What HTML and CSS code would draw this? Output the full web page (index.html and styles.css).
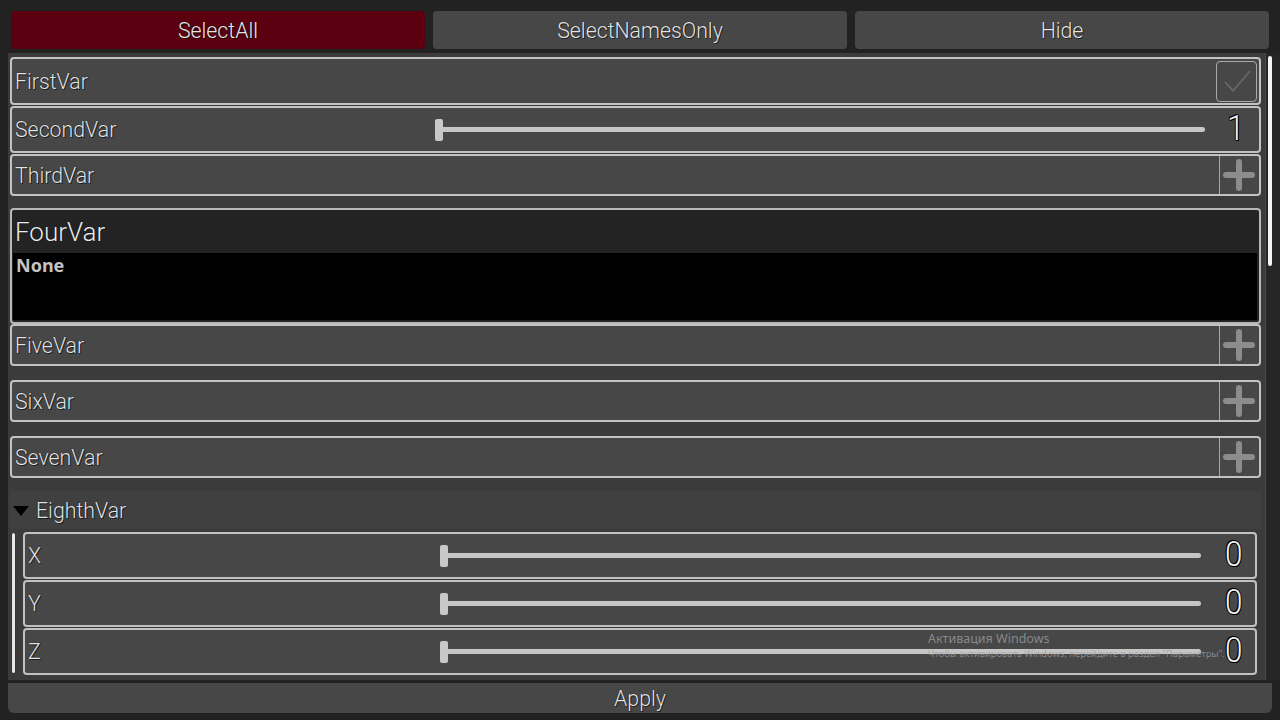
FILE: index.html
```html
<!DOCTYPE html>
<html>
<head>
<meta charset="utf-8">
<link rel="stylesheet" href="styles.css">
</head>
<body>
<div class="app">
  <div class="toolbar">
    <div class="tbtn active">SelectAll</div>
    <div class="tbtn">SelectNamesOnly</div>
    <div class="tbtn">Hide</div>
  </div>
  <div class="main">
    <div class="panel">
      <div class="row h48">
        <div class="label">FirstVar</div>
        <div class="spacer"></div>
        <div class="check">
          <svg width="34" height="34" viewBox="0 0 34 34"><path d="M5 18 L13 27 L30 7" fill="none" stroke="#6a6a6a" stroke-width="1.6" stroke-linejoin="round"/><path d="M6.5 18 L13 25 L29 7.5" fill="none" stroke="#555" stroke-width="0.8"/></svg>
        </div>
      </div>
      <div class="row h47">
        <div class="label">SecondVar</div>
        <div class="slider"><div class="track"></div><div class="handle"></div></div>
        <div class="value one">1</div>
      </div>
      <div class="row h42">
        <div class="label">ThirdVar</div>
        <div class="spacer"></div>
        <div class="plus"><span class="ph"></span><span class="pv"></span></div>
      </div>
      <div class="obj">
        <div class="obj-head">FourVar</div>
        <div class="obj-body">None</div>
      </div>
      <div class="row h42 touch">
        <div class="label">FiveVar</div>
        <div class="spacer"></div>
        <div class="plus"><span class="ph"></span><span class="pv"></span></div>
      </div>
      <div class="row h42 gap">
        <div class="label">SixVar</div>
        <div class="spacer"></div>
        <div class="plus"><span class="ph"></span><span class="pv"></span></div>
      </div>
      <div class="row h42 gap">
        <div class="label">SevenVar</div>
        <div class="spacer"></div>
        <div class="plus"><span class="ph"></span><span class="pv"></span></div>
      </div>
      <div class="fold">
        <span class="tri"></span>
        <span class="fold-label">EighthVar</span>
      </div>
      <div class="nested">
        <div class="bar"></div>
        <div class="nested-rows">
          <div class="row h47 sub">
            <div class="label">X</div>
            <div class="slider"><div class="track"></div><div class="handle"></div></div>
            <div class="value">0</div>
          </div>
          <div class="row h47 sub">
            <div class="label">Y</div>
            <div class="slider"><div class="track"></div><div class="handle"></div></div>
            <div class="value">0</div>
          </div>
          <div class="row h47 sub">
            <div class="label">Z</div>
            <div class="slider"><div class="track"></div><div class="handle"></div></div>
            <div class="value">0</div>
          </div>
        </div>
      </div>
    </div>
    <div class="scrollbar"><div class="thumb"></div></div>
  </div>
  <div class="apply">Apply</div>
  <div class="watermark">
    <div class="wm1">Активация Windows</div>
    <div class="wm2">Чтобы активировать Windows, перейдите в раздел "Параметры".</div>
  </div>
</div>
</body>
</html>
```

FILE: styles.css
```css
html, body {
  margin: 0;
  padding: 0;
  background: #222222;
}
body {
  width: 1280px;
  height: 720px;
  overflow: hidden;
  font-family: Roboto, "Liberation Sans", sans-serif;
  color: #e2e2e2;
}
.app {
  position: relative;
  width: 1280px;
  height: 720px;
  display: flex;
  flex-direction: column;
}
.toolbar {
  display: flex;
  gap: 8px;
  padding: 11px 11px 0 11px;
  height: 38px;
}
.tbtn {
  flex: 1;
  background: #474747;
  border-radius: 4px;
  display: flex;
  align-items: center;
  justify-content: center;
  font-size: 21.3px;
  font-weight: 300;
  color: #e6e6e6;
  text-shadow: 0 0 1px #111, 1px 1px 0 rgba(0,0,0,0.5);
}
.tbtn.active {
  background: #5a0010;
}
.main {
  margin-top: 4px;
  height: 627px;
  display: flex;
}
.panel {
  margin-left: 8px;
  width: 1253px;
  background: #3b3b3b;
  padding: 4px 4px 0 2px;
  display: flex;
  flex-direction: column;
  overflow: hidden;
}
.scrollbar {
  width: 15px;
  background: #262626;
  border-left: 1px solid #4a4a4a;
  padding: 3px 0 0 1px;
  box-sizing: border-box;
}
.thumb {
  width: 4px;
  height: 210px;
  background: #f4f4f4;
  border-radius: 2px;
  margin-left: 1px;
}
.row {
  box-sizing: border-box;
  background: #474747;
  border: 2px solid #c2c2c2;
  border-radius: 4px;
  display: flex;
  align-items: center;
  flex-shrink: 0;
}
.h48 { height: 48px; }
.h47 { height: 47px; margin-top: 1px; }
.h42 { height: 42px; margin-top: 1px; }
.row.touch { margin-top: 0; }
.row.gap { margin-top: 14px; }
.label {
  width: 420px;
  flex-shrink: 0;
  padding-left: 3px;
  font-size: 21.3px;
  font-weight: 300;
  color: #e4e4e4;
  text-shadow: 0 0 1px #000, 1px 1px 0 rgba(0,0,0,0.55);
}
.spacer { flex: 1; }
.check {
  width: 41px;
  height: 41px;
  box-sizing: border-box;
  border: 1.5px solid #a9a9a9;
  border-radius: 4px;
  margin-right: 2px;
  display: flex;
  align-items: center;
  justify-content: center;
}
.slider {
  flex: 1;
  position: relative;
  height: 24px;
  display: flex;
  align-items: center;
}
.track {
  flex: 1;
  height: 5px;
  background: #c6c6c6;
  border-radius: 3px;
  margin-left: 4px;
}
.handle {
  position: absolute;
  left: 0;
  top: 1px;
  width: 8px;
  height: 22px;
  background: #c8c8c8;
  border-radius: 2px;
}
.value {
  width: 54px;
  box-sizing: border-box;
  flex-shrink: 0;
  text-align: right;
  padding-right: 14px;
  margin-top: -2px;
  font-size: 35px;
  font-weight: 300;
  color: #f0f0f0;
  transform: scaleX(0.9);
  transform-origin: right center;
  text-shadow: -1px 0 #000, 1px 0 #000, 0 -1px #000, 0 1px #000, 1px 1px #000, -1px -1px #000;
}
.value.one { padding-right: 16px; }
.plus {
  width: 40px;
  height: 100%;
  box-sizing: border-box;
  border-left: 1.5px solid #a6a6a6;
  position: relative;
}
.ph, .pv {
  position: absolute;
  background: #8c8c8c;
  border-radius: 3px;
}
.ph {
  left: 3px;
  top: 16px;
  width: 32px;
  height: 6px;
}
.pv {
  left: 16px;
  top: 3px;
  width: 6px;
  height: 32px;
}
.obj {
  margin-top: 12px;
  height: 116px;
  box-sizing: border-box;
  border: 2px solid #b8b8b8;
  border-radius: 4px;
  background: #232323;
  display: flex;
  flex-direction: column;
  flex-shrink: 0;
  padding: 0 2px 2px 1px;
}
.obj-head {
  height: 43px;
  display: flex;
  align-items: center;
  padding-left: 2px;
  font-size: 26px;
  font-weight: 300;
  color: #ececec;
  text-shadow: 0 0 1px #000;
}
.obj-body {
  flex: 1;
  background: #000;
  padding: 1px 3px;
  font-family: "Noto Sans", "Open Sans", sans-serif;
  font-weight: 700;
  font-size: 18px;
  color: #c4c4c4;
  line-height: 22px;
}
.fold {
  margin-top: 13px;
  height: 38px;
  background: #404040;
  display: flex;
  align-items: center;
  flex-shrink: 0;
}
.tri {
  width: 0;
  height: 0;
  border-left: 8px solid transparent;
  border-right: 8px solid transparent;
  border-top: 10px solid #000;
  margin-left: 3px;
  margin-right: 7px;
  margin-top: 1px;
}
.fold-label {
  font-size: 21.3px;
  font-weight: 300;
  color: #e4e4e4;
  text-shadow: 0 0 1px #000, 1px 1px 0 rgba(0,0,0,0.55);
}
.nested {
  display: flex;
  margin-top: 3px;
  flex-shrink: 0;
}
.bar {
  width: 3px;
  margin: 1px 8px 2px 2px;
  background: #e8e8e8;
  border-radius: 2px;
  box-shadow: 0 0 1px #000;
}
.nested-rows {
  flex: 1;
  margin-right: 4px;
  display: flex;
  flex-direction: column;
}
.nested-rows .row:first-child { margin-top: 0; }
.row.sub .label { width: 412px; }
.apply {
  margin: 3px 8px 0 8px;
  height: 30px;
  background: #474747;
  border-radius: 0 0 6px 6px;
  display: flex;
  align-items: center;
  justify-content: center;
  font-size: 21.3px;
  font-weight: 300;
  color: #e6e6e6;
  text-shadow: 0 0 1px #000, 1px 1px 0 rgba(0,0,0,0.5);
}
.watermark {
  position: absolute;
  left: 928px;
  top: 631px;
  white-space: nowrap;
  font-family: "Noto Sans", "Open Sans", sans-serif;
  color: rgba(160,160,160,0.75);
}
.wm1 {
  font-size: 12.5px;
  line-height: 16px;
}
.wm2 {
  font-size: 9.4px;
  line-height: 14px;
}
```
